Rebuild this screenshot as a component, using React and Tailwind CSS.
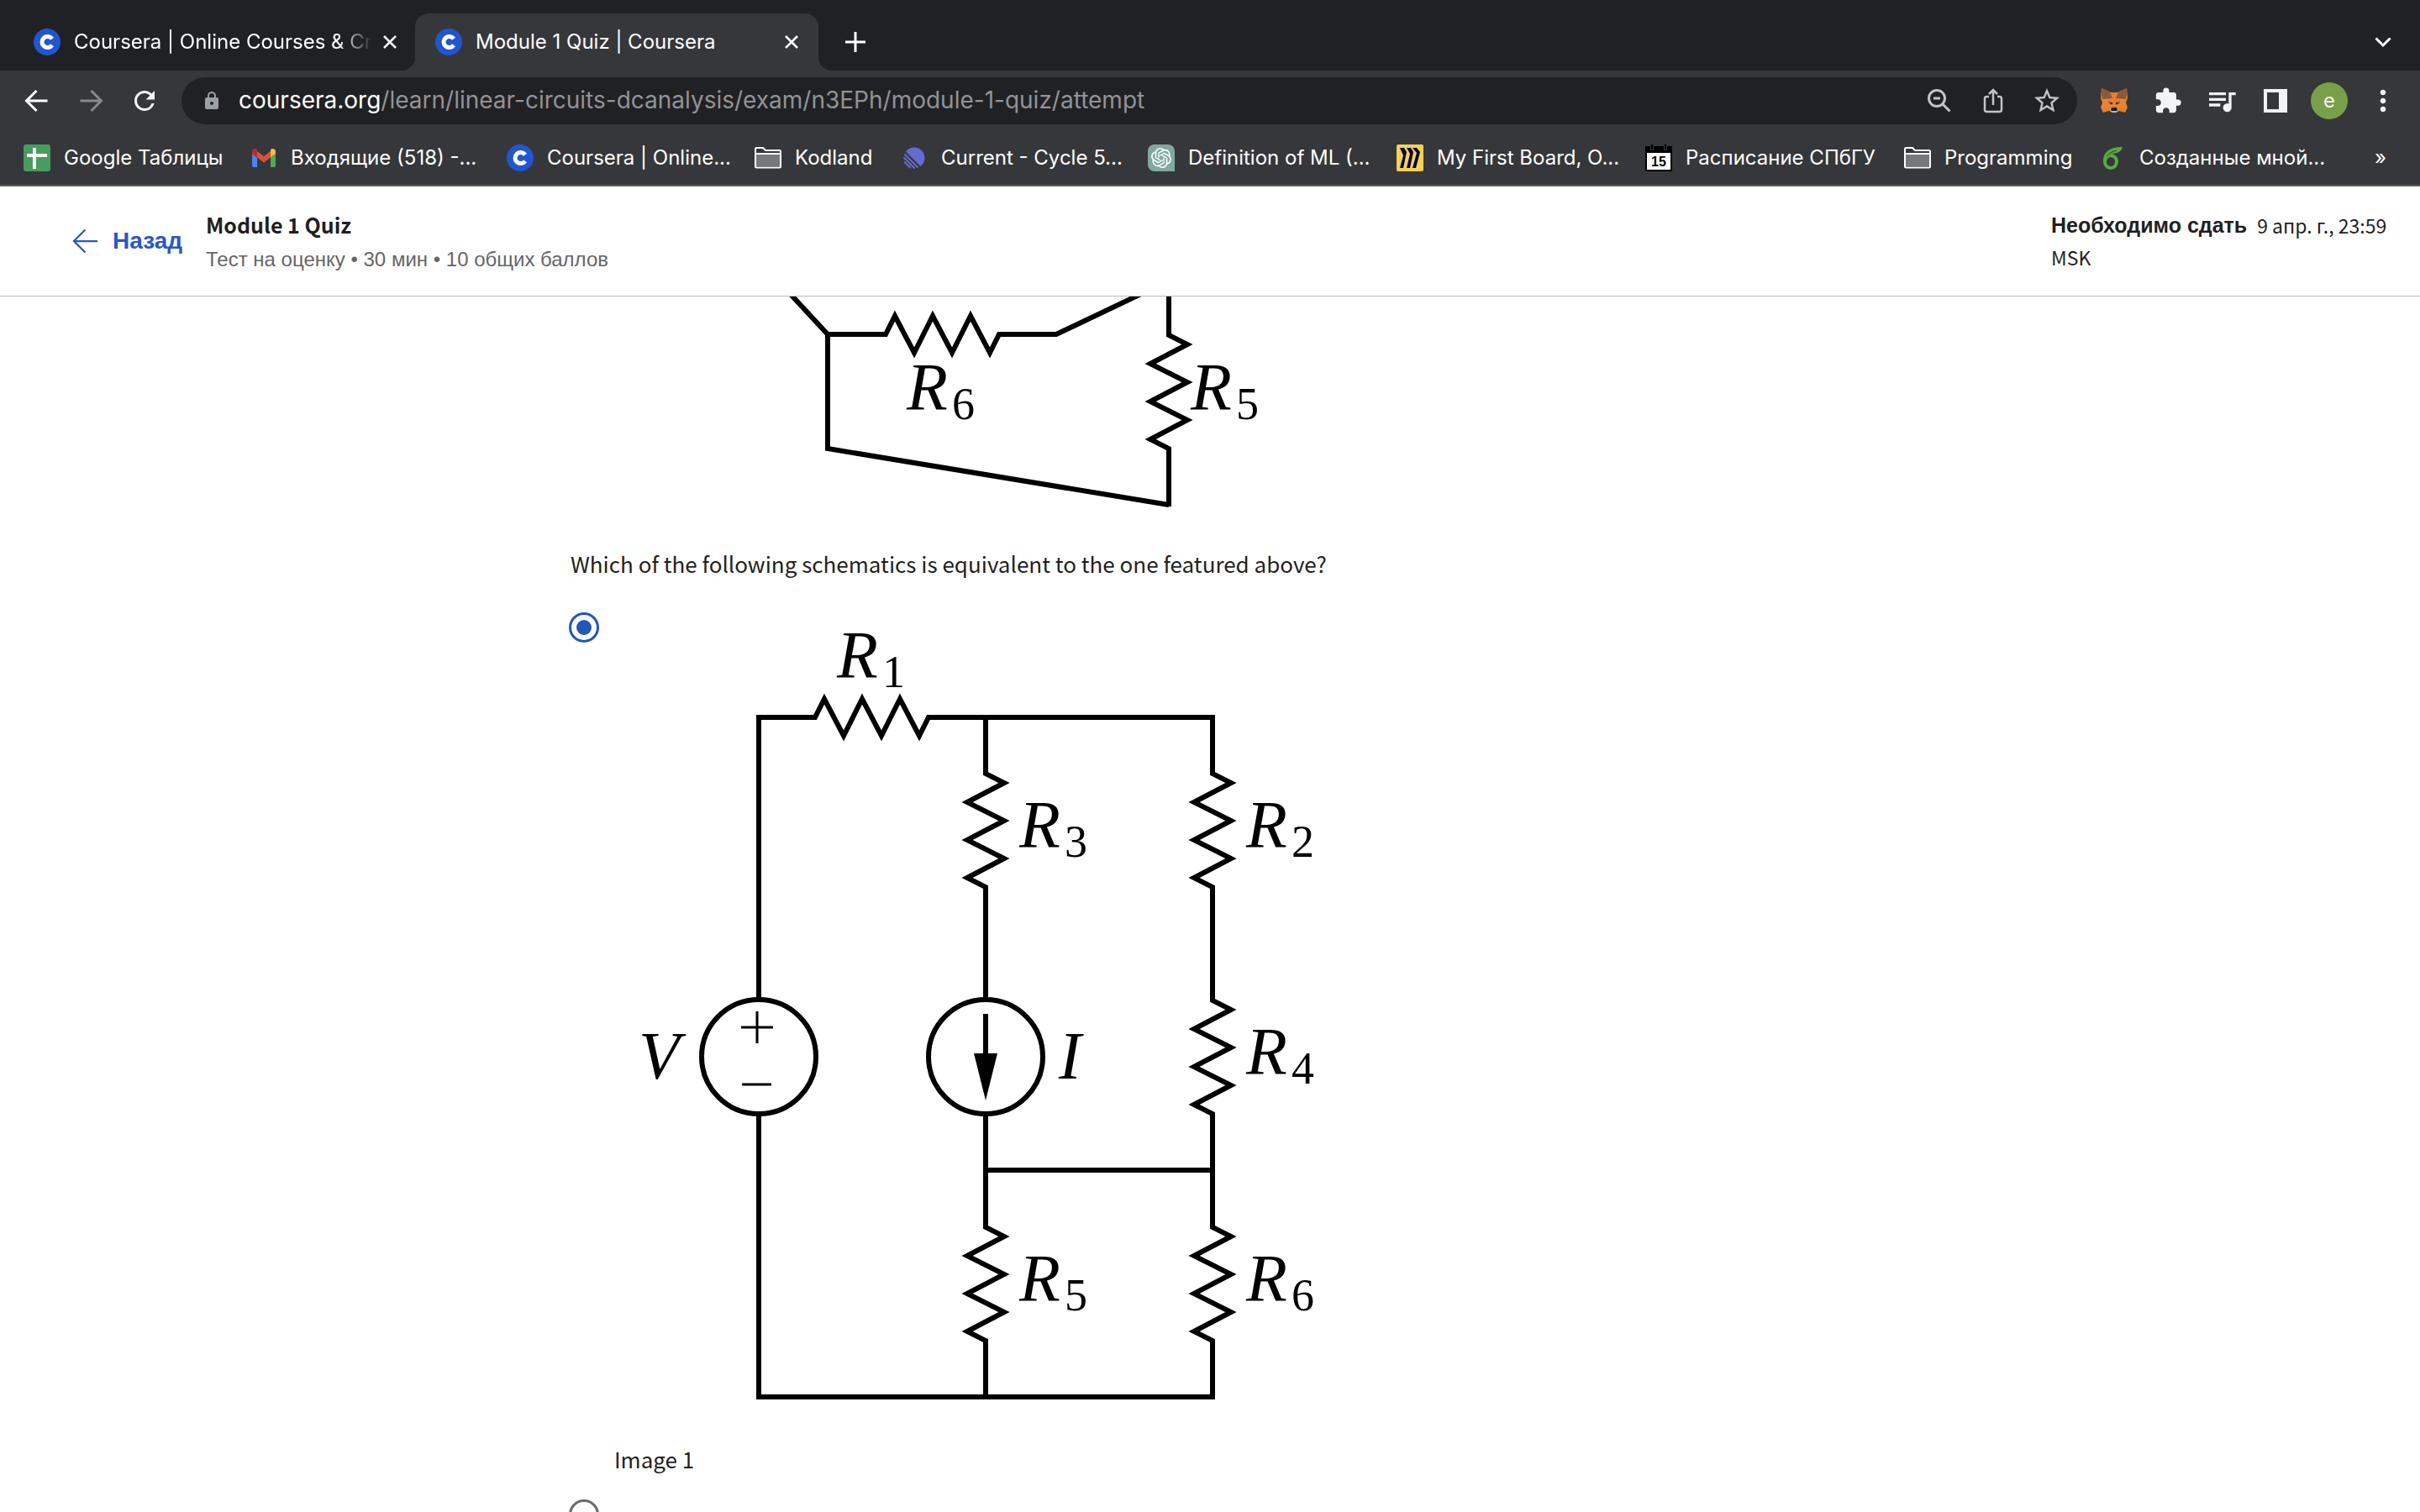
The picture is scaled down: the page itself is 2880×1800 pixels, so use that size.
import { MdExtension, MdQueueMusic, MdLock, MdRefresh, MdMoreVert, MdStarBorder } from "react-icons/md";
import { SiOpenai } from "react-icons/si";

const ui = "font-['Inter','Liberation_Sans',sans-serif]";

function CourseraIcon() {
  return (
    <svg viewBox="0 0 32 32" className="size-8 shrink-0" aria-hidden="true">
      <circle cx="16" cy="16" r="16" fill="#2156cf" />
      <path d="M22 12.2A6.6 6.6 0 1 0 22 19.8" fill="none" stroke="#fff" strokeWidth="5" />
    </svg>
  );
}

function SheetsIcon() {
  return (
    <svg viewBox="0 0 32 32" className="size-8" aria-hidden="true">
      <rect width="32" height="32" rx="3" fill="#469d5e" />
      <path d="M13 4v25M4 13h24" stroke="#fff" strokeWidth="4" />
    </svg>
  );
}

function GmailIcon() {
  return (
    <svg viewBox="0 0 32 32" className="size-8" aria-hidden="true">
      <path d="M2 11l6 4.500V27H4a2 2 0 0 1-2-2z" fill="#4e84ee" />
      <path d="M30 11l-6 4.500V27h4a2 2 0 0 0 2-2z" fill="#53a758" />
      <path d="M8 8l8 6 8-6v7.500L16 21.500 8 15.500z" fill="#d94f3d" />
      <path d="M2 8.500C2 5 5.500 4 8 6v9.500L2 11z" fill="#b3312a" />
      <path d="M30 8.500C30 5 26.500 4 24 6v9.500L30 11z" fill="#f3bf42" />
    </svg>
  );
}

function FolderIcon() {
  return (
    <svg viewBox="0 0 32 32" className="size-8" aria-hidden="true">
      <path d="M1 26V5.500Q1 4 2.500 4H10l3 3h16.500Q31 7 31 8.500V26q0 1.500-1.500 1.500h-27Q1 27.500 1 26z" fill="#36373a" stroke="#fff" strokeWidth="2" />
      <path d="M2 11h28v15.500H2z" fill="#77787a" />
      <path d="M1 11h30" stroke="#fff" strokeWidth="2" />
    </svg>
  );
}

function LinearIcon() {
  return (
    <svg viewBox="0 0 32 32" className="size-8" aria-hidden="true">
      <path d="M6 8.500A12.500 12.500 0 1 1 23.500 26z" fill="#656bd0" />
      <path d="M4.500 11.500L20.500 27.500M3.500 15.500L16.500 28.500M4 20.500L11.500 28" stroke="#656bd0" strokeWidth="2" />
    </svg>
  );
}

function GptIcon() {
  return (
    <span className="flex size-8 items-center justify-center rounded-t-lg rounded-bl-lg bg-[#80a99d]">
      <SiOpenai className="size-6 text-white" />
    </span>
  );
}

function MiroIcon() {
  return (
    <svg viewBox="0 0 32 32" className="size-8" aria-hidden="true">
      <rect width="32" height="32" rx="2" fill="#f7d154" />
      <path d="M4 4h5l3 5-4 19H4l4-15zM12 4h5l3 5-4 19h-4l4-17zM19 4h5l4 5-5 19h-4l5-18z" fill="#07043c" />
    </svg>
  );
}

function CalendarIcon() {
  return (
    <svg viewBox="0 0 32 32" className="size-8" aria-hidden="true">
      <path d="M0 2h32v30H0z" fill="#000" />
      <path d="M2 10h28v20H2z" fill="#fff" />
      <path d="M8 0v7M24 0v7" stroke="#36373a" strokeWidth="4" />
      <path d="M8 0v6M24 0v6" stroke="#000" strokeWidth="2" />
      <text x="16" y="26" textAnchor="middle" fontSize="16" fontWeight="700" fontFamily="Liberation Sans, sans-serif">15</text>
    </svg>
  );
}

function OverleafIcon() {
  return (
    <svg viewBox="0 0 32 32" className="size-8" aria-hidden="true">
      <ellipse cx="14" cy="20.500" rx="7" ry="7.500" fill="none" stroke="#5ba846" strokeWidth="4" />
      <path d="M5 20C5 9 12 3 28 3c-2 7-7 7-12 8-5 1-6 4-7 8z" fill="#5ba846" />
      <path d="M9 14c4-4 7-6 12-7" fill="none" stroke="#36373a" strokeWidth="1" />
    </svg>
  );
}

function FoxIcon() {
  return (
    <svg viewBox="0 0 32 32" className="size-8" aria-hidden="true">
      <path d="M1 1l11 5h8l11-5 1 12-2 5 2 6-3 6-7-2-4 2h-4l-4-2-7 2-3-6 2-6-2-5z" fill="#e2812f" />
      <path d="M1 1l10 5 3 7-12 1-1-6zM31 1L21 6l-3 7 12 1 1-6z" fill="#8c5a35" />
      <path d="M1 14h12l1 9-13 1 2-6zM31 14H19l-1 9 13 1-2-6z" fill="#e8853a" />
      <path d="M9 16l5 2-1 3-4-2zM23 16l-5 2 1 3 4-2z" fill="#b5642b" />
      <path d="M11 18h3v2h-2zM21 18h-3v2h2z" fill="#2f2c31" />
      <path d="M11 26l2-2h6l2 2-1 3-2 1h-4l-2-1z" fill="#c9b7a9" />
      <path d="M13 24h6l1 3-1 1h-6l-1-1z" fill="#1d1a1a" />
    </svg>
  );
}

function ArrowLeft({ className }) {
  return (
    <svg viewBox="0 0 32 32" className={className} fill="none" stroke="currentColor" aria-hidden="true">
      <path d="M28.500 16H4M15.500 4L3.500 16l12 12" />
    </svg>
  );
}

function CloseIcon() {
  return (
    <svg viewBox="0 0 16 16" className="size-4" stroke="currentColor" strokeWidth="2.500" aria-hidden="true">
      <path d="M1 1l14 14M15 1L1 15" />
    </svg>
  );
}

function Tab({ title, active }) {
  return (
    <div className={active ? "relative flex w-[480px] items-center gap-4 rounded-t-2xl bg-[#36373a] px-6" : "flex w-[454px] items-center gap-3 pr-[22px]"}>
      {active && (
        <>
          <span className="absolute bottom-0 -left-4 size-4 overflow-hidden"><span className="absolute right-0 bottom-0 size-8 rounded-full shadow-[0_0_0_16px_#36373a]" /></span>
          <span className="absolute -right-4 bottom-0 size-4 overflow-hidden"><span className="absolute bottom-0 left-0 size-8 rounded-full shadow-[0_0_0_16px_#36373a]" /></span>
        </>
      )}
      <CourseraIcon />
      <span className={active ? "flex-1 overflow-hidden whitespace-nowrap" : "ml-1 flex-1 overflow-hidden whitespace-nowrap [mask-image:linear-gradient(to_right,black_88%,transparent)]"}>{title}</span>
      <button aria-label="Close tab"><CloseIcon /></button>
    </div>
  );
}

const bookmarks = [
  { label: "Google Таблицы", icon: SheetsIcon, width: "w-[270px]" },
  { label: "Входящие (518) -...", icon: GmailIcon, width: "w-[305px]" },
  { label: "Coursera | Online...", icon: CourseraIcon, width: "w-[295px]" },
  { label: "Kodland", icon: FolderIcon, width: "w-[174px]" },
  { label: "Current - Cycle 5...", icon: LinearIcon, width: "w-[294px]" },
  { label: "Definition of ML (...", icon: GptIcon, width: "w-[296px]" },
  { label: "My First Board, O...", icon: MiroIcon, width: "w-[296px]" },
  { label: "Расписание СПбГУ", icon: CalendarIcon, width: "w-[308px]" },
  { label: "Programming", icon: FolderIcon, width: "w-[232px]" },
  { label: "Созданные мной...", icon: OverleafIcon, width: "w-[290px]" },
];

const toolButton = "flex size-9 items-center justify-center";

function BrowserChrome() {
  return (
    <div className={`${ui} shrink-0 bg-[#36373a] text-2xl text-white`}>
      <div className="flex h-[84px] bg-[#202124] pt-4 pr-[34px] pl-10">
        <Tab title="Coursera | Online Courses & Cr" />
        <Tab title="Module 1 Quiz | Coursera" active />
        <button aria-label="New tab" className="ml-8 self-center">
          <svg viewBox="0 0 24 24" className="size-6" stroke="currentColor" strokeWidth="3" aria-hidden="true"><path d="M12 0v24M0 12h24" /></svg>
        </button>
        <button aria-label="Search tabs" className="ml-auto self-center">
          <svg viewBox="0 0 20 20" className="size-5" fill="none" stroke="currentColor" strokeWidth="3" aria-hidden="true"><path d="M1.500 5.500L10 14l8.500-8.500" /></svg>
        </button>
      </div>
      <div className="flex h-[72px] items-center pr-[26px] pl-[26px]">
        <div className="flex items-center gap-7">
          <button aria-label="Back" className={toolButton}><ArrowLeft className="size-8 stroke-3" /></button>
          <button aria-label="Forward" className={`${toolButton} text-[#88898b]`}><ArrowLeft className="size-8 rotate-180 stroke-3" /></button>
          <button aria-label="Reload" className={toolButton}><MdRefresh className="size-10 text-[#f1f3f4]" /></button>
        </div>
        <div className="ml-[26px] flex h-14 flex-1 items-center rounded-full bg-[#202124] pr-[18px] pl-6 text-[28px]">
          <MdLock className="size-6 text-[#9aa0a6]" />
          <label htmlFor="address" className="ml-5">coursera.org</label>
          <input id="address" className="min-w-0 flex-1 bg-transparent text-[#929395] outline-none" defaultValue="/learn/linear-circuits-dcanalysis/exam/n3EPh/module-1-quiz/attempt" />
          <div className="flex items-center gap-7 text-[#c3c4c6]">
            <button aria-label="Zoom" className={toolButton}>
              <svg viewBox="0 0 32 32" className="size-8" fill="none" stroke="currentColor" strokeWidth="3" aria-hidden="true"><circle cx="13" cy="13" r="9.500" /><path d="M19.500 19.500L28.500 28.500M9 13h8" /></svg>
            </button>
            <button aria-label="Share" className={toolButton}>
              <svg viewBox="0 0 32 32" className="size-8" fill="none" stroke="currentColor" strokeWidth="2.500" aria-hidden="true"><path d="M11 11H8.500Q6 11 6 13.500v13Q6 29 8.500 29h15q2.500 0 2.500-2.500v-13q0-2.500-2.500-2.500H21M16 21V3M11 8l5-5 5 5" /></svg>
            </button>
            <button aria-label="Bookmark this page" className={toolButton}><MdStarBorder className="size-9" /></button>
          </div>
        </div>
        <div className="ml-[26px] flex items-center gap-7 text-[#f1f3f4]">
          <button aria-label="Wallet" className={toolButton}><FoxIcon /></button>
          <button aria-label="Extensions" className={toolButton}><MdExtension className="size-[34px]" /></button>
          <button aria-label="Media" className={toolButton}><MdQueueMusic className="size-10 shrink-0" /></button>
          <button aria-label="Side panel" className={toolButton}>
            <svg viewBox="0 0 28 28" className="size-7" aria-hidden="true"><path d="M0 0h28v28H0zM4 4v20h14V4z" fill="currentColor" fillRule="evenodd" /></svg>
          </button>
          <button className="-mx-1 flex size-11 items-center justify-center rounded-full bg-[#78a048]">e</button>
          <button aria-label="Menu" className={toolButton}><MdMoreVert className="size-10 shrink-0" /></button>
        </div>
      </div>
      <nav className="flex h-[66px] items-center border-b-2 border-[#5f5f63] pl-7">
        {bookmarks.map(({ label, icon: Icon, width }) => (
          <a key={label} href="#" className={`flex shrink-0 items-center gap-4 whitespace-nowrap ${width}`}>
            <Icon />
            {label}
          </a>
        ))}
        <button aria-label="More bookmarks" className="mr-10 ml-auto">»</button>
      </nav>
    </div>
  );
}

function QuizHeader() {
  return (
    <header className="flex h-[131px] shrink-0 items-start border-b border-[#bdbdbd] pt-[27px] pr-10 pl-[84px] text-[#1f1f1f]">
      <a href="#" className="mt-[18px] flex w-[133px] items-center gap-[14px] overflow-hidden font-['Liberation_Sans',sans-serif] text-[28px]/10 font-bold text-[#2a56c9]">
        <ArrowLeft className="size-9 shrink-0 stroke-2" />
        Назад
      </a>
      <div className="ml-7">
        <h1 className="font-['Noto_Sans_CJK_SC',sans-serif] text-[25px]/9 font-bold">Module 1 Quiz</h1>
        <p className="mt-1 font-['Liberation_Sans',sans-serif] text-2xl/10 text-[#666]">Тест на оценку • 30 мин • 10 общих баллов</p>
      </div>
      <div className="ml-auto w-[399px] font-['Noto_Sans_CJK_SC',sans-serif] text-[23px]/[38px]">
        <p className="flex gap-3 whitespace-nowrap">
          <strong className="font-['Liberation_Sans',sans-serif] text-[25px]/[38px]">Необходимо сдать</strong>
          <span>9 апр. г., 23:59</span>
        </p>
        <p>MSK</p>
      </div>
    </header>
  );
}

function Label({ x, y, sub }) {
  return (
    <>
      <text x={x} y={y} fontSize="80" fontStyle="italic">R</text>
      <text x={x + 54} y={y + 11} fontSize="54">{sub}</text>
    </>
  );
}

const zigX = "l11-22 23 44 22-44 23 44 22-44 23 44 11-22";
const zigY = "l22 11-44 23 44 22-44 23 44 22-44 23 22 11";

function SourceSchematic() {
  return (
    <svg viewBox="677 353 860 276" className="block h-[276px] w-[860px]" fontFamily="Liberation Serif, serif" role="img" aria-label="Schematic">
      <g fill="none" stroke="#000" strokeWidth="6">
        <path d={`M935 344L985 398H1054${zigX}H1257L1362 348`} />
        <path d="M985 398V534L1391 601" />
        <path d={`M1391 350V399${zigY}V603`} />
      </g>
      <Label x={1079} y={488} sub="6" />
      <Label x={1417} y={488} sub="5" />
    </svg>
  );
}

function AnswerSchematic() {
  return (
    <svg viewBox="731 740 860 960" className="block h-[960px] w-[860px] overflow-visible" fontFamily="Liberation Serif, serif" role="img" aria-label="Schematic 1">
      <g fill="none" stroke="#000" strokeWidth="6">
        <path d={`M903 1190V854H970${zigX}H1443V921${zigY}V1191${zigY}V1461${zigY}V1663H903V1326`} />
        <path d={`M1173 854V921${zigY}V1190`} />
        <path d={`M1173 1326V1461${zigY}V1663M1173 1393H1443`} />
        <circle cx="903" cy="1258" r="68" />
        <circle cx="1173" cy="1258" r="68" />
        <path d="M1173 1207V1260" />
        <path d="M882 1223H920M901 1204V1242M883 1291H918" strokeWidth="3" />
      </g>
      <path d="M1159 1254H1187L1173 1310z" />
      <text x="760" y="1284" fontSize="80" fontStyle="italic">V</text>
      <text x="1260" y="1284" fontSize="80" fontStyle="italic">I</text>
      <Label x={996} y={807} sub="1" />
      <Label x={1213} y={1009} sub="3" />
      <Label x={1483} y={1009} sub="2" />
      <Label x={1483} y={1279} sub="4" />
      <Label x={1213} y={1549} sub="5" />
      <Label x={1483} y={1549} sub="6" />
    </svg>
  );
}

const radio = "flex size-9 shrink-0 appearance-none items-center justify-center rounded-full border-[3px] border-[#6b6b6b] checked:border-[#2357b5] before:size-[18px] before:rounded-full checked:before:bg-[#2357b5]";

export default function App() {
  return (
    <div className="flex h-screen flex-col overflow-hidden bg-white">
      <BrowserChrome />
      <QuizHeader />
      <main className="min-h-0 flex-1 overflow-hidden pl-[677px] font-['Noto_Sans_CJK_SC',sans-serif] text-[26px]/10 text-[#1f1f1f]">
        <SourceSchematic />
        <fieldset className="mt-[22px]">
          <legend className="ml-[2px]">Which of the following schematics is equivalent to the one featured above?</legend>
          <label className="mt-[38px] flex items-start gap-[18px]">
            <input type="radio" name="answer" defaultChecked className={radio} />
            <span className="flex flex-col pt-[11px]">
              <AnswerSchematic />
              <span className="mt-[17px]">Image 1</span>
            </span>
          </label>
          <input type="radio" name="answer" aria-label="Image 2" className={`mt-7 ${radio}`} />
        </fieldset>
      </main>
    </div>
  );
}
